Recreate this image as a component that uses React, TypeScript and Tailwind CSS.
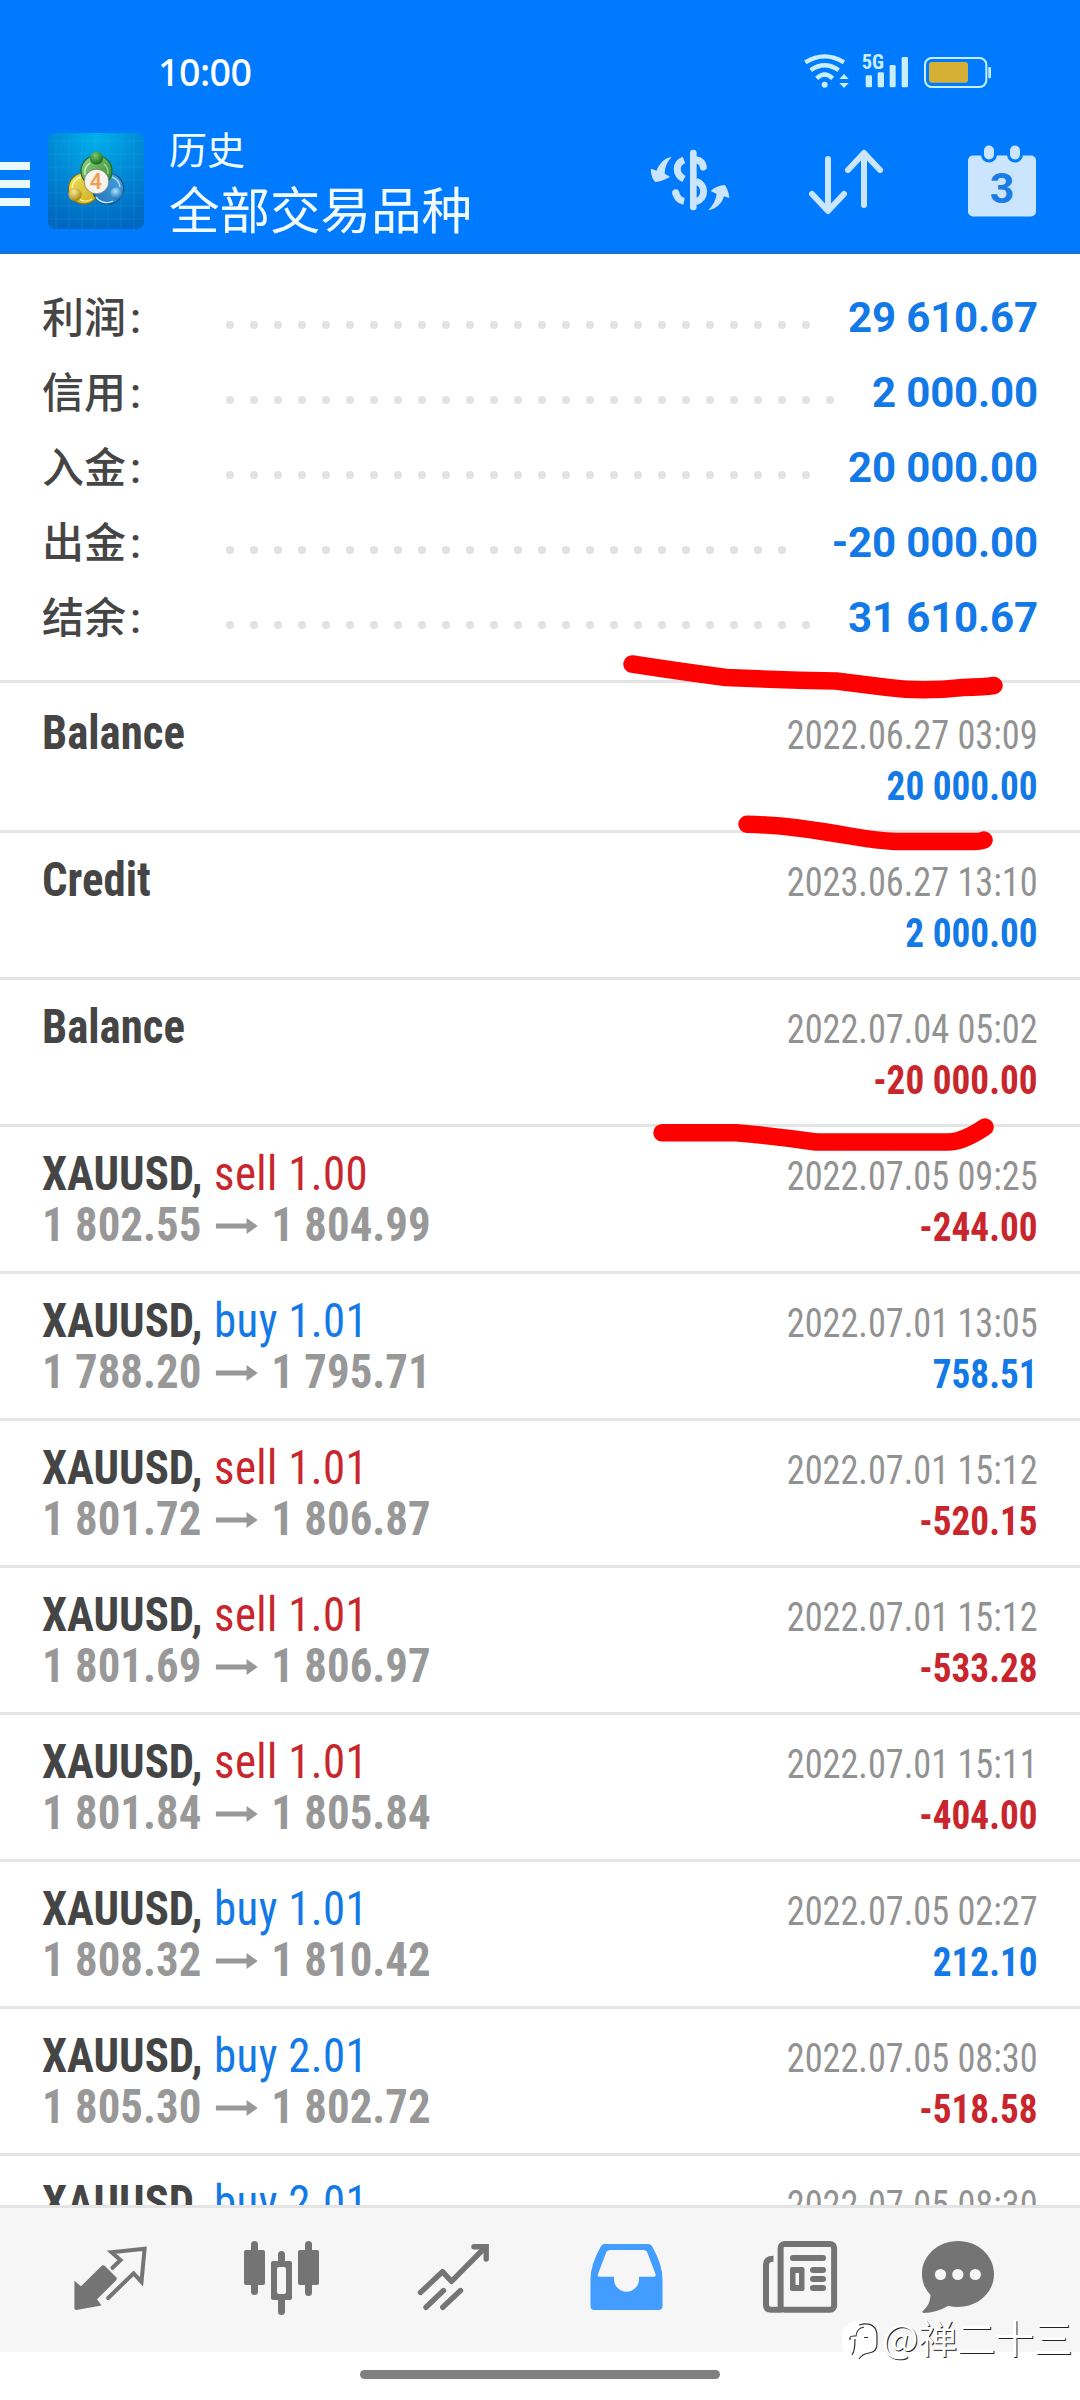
import type { ReactNode } from "react";

type Tone = "blue" | "red";

type SummaryRow = {
  label: string;
  value: string;
  dots: number;
};

type HistoryItem = {
  title: string;
  action?: string;
  side?: Tone;
  open?: string;
  close?: string;
  date: string;
  amount?: string;
  tone: Tone;
};

const toneClass: Record<Tone, string> = {
  blue: "text-[#1279e6]",
  red: "text-[#c8262c]",
};

const summary: SummaryRow[] = [
  { label: "利润", value: "29 610.67", dots: 25 },
  { label: "信用", value: "2 000.00", dots: 26 },
  { label: "入金", value: "20 000.00", dots: 25 },
  { label: "出金", value: "-20 000.00", dots: 24 },
  { label: "结余", value: "31 610.67", dots: 25 },
];

const history: HistoryItem[] = [
  { title: "Balance", date: "2022.06.27 03:09", amount: "20 000.00", tone: "blue" },
  { title: "Credit", date: "2023.06.27 13:10", amount: "2 000.00", tone: "blue" },
  { title: "Balance", date: "2022.07.04 05:02", amount: "-20 000.00", tone: "red" },
  { title: "XAUUSD", action: "sell 1.00", side: "red", open: "1 802.55", close: "1 804.99", date: "2022.07.05 09:25", amount: "-244.00", tone: "red" },
  { title: "XAUUSD", action: "buy 1.01", side: "blue", open: "1 788.20", close: "1 795.71", date: "2022.07.01 13:05", amount: "758.51", tone: "blue" },
  { title: "XAUUSD", action: "sell 1.01", side: "red", open: "1 801.72", close: "1 806.87", date: "2022.07.01 15:12", amount: "-520.15", tone: "red" },
  { title: "XAUUSD", action: "sell 1.01", side: "red", open: "1 801.69", close: "1 806.97", date: "2022.07.01 15:12", amount: "-533.28", tone: "red" },
  { title: "XAUUSD", action: "sell 1.01", side: "red", open: "1 801.84", close: "1 805.84", date: "2022.07.01 15:11", amount: "-404.00", tone: "red" },
  { title: "XAUUSD", action: "buy 1.01", side: "blue", open: "1 808.32", close: "1 810.42", date: "2022.07.05 02:27", amount: "212.10", tone: "blue" },
  { title: "XAUUSD", action: "buy 2.01", side: "blue", open: "1 805.30", close: "1 802.72", date: "2022.07.05 08:30", amount: "-518.58", tone: "red" },
  { title: "XAUUSD", action: "buy 2.01", side: "blue", date: "2022.07.05 08:30", tone: "red" },
];

const StatusIcons = () => (
  <svg viewBox="0 0 612 156" className="h-[52px] w-[204px]" fill="#c9efff">
    <g fill="none" stroke="#c9efff" strokeWidth="13">
      <path d="M28 49Q86 13 144 49" />
      <path d="M44 73Q86 43 128 73" />
      <path d="M62 97Q86 74 110 97" />
    </g>
    <circle cx="86" cy="116" r="9" />
    <path d="M144 84l14 15h-28zM144 126l14-15h-28z" />
    <text x="197" y="70" className="font-['Roboto_Condensed'] font-bold" fontSize="60" textLength="67" lengthAdjust="spacingAndGlyphs">
      5G
    </text>
    <rect x="209" y="88" width="19" height="36" rx="4" />
    <rect x="245" y="79" width="19" height="45" rx="4" />
    <rect x="281" y="57" width="18" height="67" rx="4" />
    <rect x="317" y="33" width="19" height="91" rx="4" />
    <rect x="387" y="36" width="184" height="87" rx="20" fill="none" stroke="#c9efff" strokeWidth="6" />
    <rect x="399" y="48" width="117" height="62" rx="9" fill="#d6b034" />
    <rect x="577" y="63" width="8" height="34" rx="3" />
  </svg>
);

const AppLogo = () => (
  <svg viewBox="0 0 96 96" className="size-24">
    <defs>
      <radialGradient id="sky" cx="50%" cy="5%" r="95%">
        <stop offset="0" stopColor="#00b0ea" />
        <stop offset="0.55" stopColor="#0086d4" />
        <stop offset="1" stopColor="#0068c0" />
      </radialGradient>
      <linearGradient id="green" x1="0" y1="0" x2="1" y2="1">
        <stop offset="0" stopColor="#9ed68a" />
        <stop offset="1" stopColor="#1f8427" />
      </linearGradient>
      <linearGradient id="yellow" x1="0" y1="0" x2="1" y2="1">
        <stop offset="0" stopColor="#f2e35c" />
        <stop offset="1" stopColor="#c9ab18" />
      </linearGradient>
      <linearGradient id="azure" x1="1" y1="0" x2="0" y2="1">
        <stop offset="0" stopColor="#4aa5de" />
        <stop offset="1" stopColor="#1f74bd" />
      </linearGradient>
      <radialGradient id="greenBall" cx="40%" cy="30%" r="70%">
        <stop offset="0" stopColor="#7cc96c" />
        <stop offset="1" stopColor="#176b22" />
      </radialGradient>
      <radialGradient id="yellowBall" cx="40%" cy="30%" r="70%">
        <stop offset="0" stopColor="#f7ec92" />
        <stop offset="1" stopColor="#a58612" />
      </radialGradient>
      <radialGradient id="azureBall" cx="40%" cy="30%" r="70%">
        <stop offset="0" stopColor="#a9e0fa" />
        <stop offset="1" stopColor="#186fb8" />
      </radialGradient>
    </defs>
    <rect width="96" height="96" rx="7" fill="url(#sky)" />
    <path
      d="M8 0v96M21 0v96M34 0v96M47 0v96M60 0v96M73 0v96M86 0v96M0 8h96M0 21h96M0 34h96M0 47h96M0 60h96M0 73h96M0 86h96"
      stroke="#5cc4f2"
      strokeOpacity="0.16"
      strokeWidth="0.8"
    />
    <g strokeWidth="1.2">
      <circle cx="36" cy="55.5" r="15.5" fill="url(#yellow)" stroke="#77721d" />
      <circle cx="60" cy="55.5" r="15.5" fill="url(#azure)" stroke="#1b4f86" />
      <circle cx="48.5" cy="38" r="15.5" fill="url(#green)" stroke="#1d6a2c" />
    </g>
    <g fill="none" strokeWidth="1.4">
      <path d="M37 42a12 12 0 0 1 5 -12" stroke="#d8f3c2" />
      <path d="M56 31a12 12 0 0 1 4 10" stroke="#d8f3c2" strokeOpacity="0.6" />
      <path d="M24 55a12 12 0 0 1 9 -11" stroke="#fbf7b4" />
      <path d="M31 66a12 12 0 0 0 13 0" stroke="#fbf7b4" strokeOpacity="0.8" />
      <path d="M48 64a13 13 0 0 0 17 4" stroke="#c8ecff" />
      <path d="M64 44a12 12 0 0 1 8 10" stroke="#c8ecff" strokeOpacity="0.8" />
    </g>
    <circle cx="48.5" cy="25" r="6.6" fill="url(#greenBall)" />
    <circle cx="27" cy="61.5" r="6.6" fill="url(#yellowBall)" />
    <circle cx="68.5" cy="60.5" r="6.2" fill="url(#azureBall)" />
    <circle cx="48.5" cy="48.5" r="12.3" fill="#f6f3ee" stroke="#5d5a4a" strokeWidth="0.6" />
    <text x="48" y="56" textAnchor="middle" fontSize="21.5" fill="#f0a050" className="font-[Roboto] font-semibold">
      4
    </text>
  </svg>
);

const DollarIcon = () => (
  <svg viewBox="0 0 276 240" className="h-20 w-[92px]" fill="#cce5ff">
    <rect x="138" y="29" width="20" height="182" rx="10" />
    <g fill="none" stroke="#cce5ff" strokeWidth="21">
      <path d="M120 60C93 70 93 103 120 117" />
      <path d="M158 60C170 62 176 70 178 81" strokeLinecap="round" />
      <path d="M120 184C106 181 98 171 95 158" />
      <path d="M156 124C186 132 187 176 156 185" />
    </g>
    <circle cx="95" cy="158" r="10.5" />
    <path d="M83 50C62 54 45 70 38 92L21 86C20 102 25 117 34 126C49 124 64 119 78 110L62 101C62 82 69 65 83 50Z" />
    <path d="M193 211C207 196 215 181 218 162L200 153C212 142 226 136 243 135C250 146 255 160 256 174L240 169C233 192 218 206 193 211Z" />
  </svg>
);

const SortIcon = () => (
  <svg
    viewBox="0 0 80 70"
    className="h-[70px] w-20"
    fill="none"
    stroke="#cce5ff"
    strokeWidth="6"
    strokeLinecap="round"
    strokeLinejoin="round"
  >
    <path d="M22 12v51M6 47l16 17l16 -17" />
    <path d="M58 58v-51M42 23l16 -17l16 17" />
  </svg>
);

const CalendarIcon = () => (
  <svg viewBox="0 0 70 72" className="h-[72px] w-[70px]" fill="#cce5ff">
    <rect x="1" y="10.5" width="68" height="61" rx="5" />
    <g stroke="#007bff" strokeWidth="3">
      <rect x="15.5" y="-1" width="13" height="17" rx="6.5" />
      <rect x="41.5" y="-1" width="13" height="17" rx="6.5" />
    </g>
    <text x="35" y="58" textAnchor="middle" fontSize="43" fill="#1b7ce8" className="font-[Roboto] font-bold">
      3
    </text>
  </svg>
);

const TabIcon = ({ children, className = "text-[#747474]" }: { children: ReactNode; className?: string }) => (
  <svg viewBox="0 0 80 80" className={`size-20 shrink-0 ${className}`} fill="currentColor">
    {children}
  </svg>
);

const Header = () => (
  <header className="h-[254px] border-b-[3px] border-[#1273e0] bg-[#007bff] text-white">
    <div className="flex h-[98px] items-start justify-between pt-[46px] pr-20 pl-[158px]">
      <span className="font-['Noto_Sans'] text-[37.5px] leading-[52px] font-medium tracking-[-0.5px]">10:00</span>
      <StatusIcons />
    </div>
    <div className="flex items-start pt-7">
      <div className="mt-[36px] flex w-[30px] flex-col gap-[10px]">
        <span className="h-2 bg-[#eaf8ff]" />
        <span className="h-2 bg-[#eaf8ff]" />
        <span className="h-2 bg-[#eaf8ff]" />
      </div>
      <div className="mt-[7px] ml-[18px]">
        <AppLogo />
      </div>
      <div className="ml-[25px] w-[475px] font-[Roboto,'Noto_Sans_CJK_SC',sans-serif] text-[#f2fbff]">
        <p className="text-[38px] leading-[50px]">历史</p>
        <p className="text-[50.5px] leading-[71px]">全部交易品种</p>
      </div>
      <div className="mt-[14px]">
        <DollarIcon />
      </div>
      <div className="mt-[21px] ml-[70px]">
        <SortIcon />
      </div>
      <div className="mt-[19px] ml-[81px]">
        <CalendarIcon />
      </div>
    </div>
  </header>
);

const Summary = () => (
  <section className="h-[429px] border-b-[3px] border-[#e4e4e4] px-[42px] pt-[26px]">
    {summary.map((row) => (
      <div key={row.label} className="flex h-[75px] items-center font-[Roboto,'Noto_Sans_CJK_SC',sans-serif] text-[42px]">
        <span className="w-[184px] pt-0.5 font-medium text-[#454545]">
          {row.label}
          <span className="ml-1">:</span>
        </span>
        <span className="flex gap-4 pt-[15px]">
          {Array.from({ length: row.dots }, (_, i) => (
            <span key={i} className="size-2 rounded-full bg-[#e2e2e2]" />
          ))}
        </span>
        <span className="ml-auto font-bold tracking-[-0.15px] text-[#1279e6]">{row.value}</span>
      </div>
    ))}
  </section>
);

const PriceArrow = () => (
  <svg viewBox="0 0 45 16" className="mx-[15px] inline-block h-4 w-[45px] align-[7px]" fill="#989898">
    <path d="M0 5.5h33V0l12 8l-12 8V10.5H0z" />
  </svg>
);

const HistoryRow = ({ item }: { item: HistoryItem }) => (
  <li className="flex h-[147px] shrink-0 justify-between border-b-[3px] border-[#e4e4e4] px-[42px] font-['Roboto_Condensed'] whitespace-nowrap">
    <div className="origin-left scale-x-[0.934] pt-[21px] text-[48px] leading-[51px]">
      <p>
        <span className="font-bold text-[#454545]">
          {item.title}
          {item.action ? "," : null}
        </span>
        {item.side ? <span className={`ml-px tracking-[0.4px] ${toneClass[item.side]}`}> {item.action}</span> : null}
      </p>
      {item.open ? (
        <p className="font-bold text-[#989898]">
          {item.open}
          <PriceArrow />
          {item.close}
        </p>
      ) : null}
    </div>
    <div className="pt-6 text-right text-[40px] leading-[51px]">
      <p className="origin-right scale-x-[0.907] text-[#929292]">{item.date}</p>
      {item.amount ? <p className={`origin-right scale-x-93 font-bold ${toneClass[item.tone]}`}>{item.amount}</p> : null}
    </div>
  </li>
);

const TabBar = () => (
  <nav className="flex h-[147px] border-t-[3px] border-[#e4e4e4] bg-[#f6f6f6] pt-8 pl-[70px]">
    <div className="flex gap-[92px]">
      <TabIcon>
        <path d="M4.4 40.7L11 46.3L31.5 26Q33.3 24.3 35 26L46 37Q47.5 39 46 40.5L27 59.3L31.5 65.5L6.4 70Q4.4 70 4.4 68Z" />
        <path d="M42.5 27.8L50.5 20L41.5 12.2L74.6 8.8L71.5 41.8L63.6 33.3L38.2 58" fill="none" stroke="currentColor" strokeWidth="4" strokeLinecap="round" />
      </TabIcon>
      <TabIcon>
        <rect x="2" y="10" width="21" height="35" rx="2" />
        <rect x="9" y="1" width="7" height="54" rx="3.5" />
        <path d="M31 21h17q2 0 2 2v35q0 2 -2 2h-17q-2 0 -2 -2v-35q0 -2 2 -2zM37 27q-2 0 -2 2v23q0 2 2 2h5q2 0 2 -2v-23q0 -2 -2 -2z" fillRule="evenodd" />
        <path d="M36 23v-8.5a3.5 3.5 0 0 1 7 0V23zM36 58v13.5a3.5 3.5 0 0 0 7 0V58z" />
        <rect x="56" y="10" width="21" height="35" rx="2" />
        <rect x="63" y="1" width="7" height="55" rx="3.5" />
      </TabIcon>
      <TabIcon>
        <g fill="none" stroke="currentColor" strokeWidth="5.4" strokeLinecap="round" strokeLinejoin="round">
          <path d="M6.5 52.5L28.5 31.7L37.5 41.3L71.5 7" />
          <path d="M60 6.7H72.2V19" strokeLinejoin="miter" />
          <path d="M12 67.3L29.5 50.5M28.8 67.3L46.5 50.5" />
        </g>
      </TabIcon>
      <TabIcon className="text-[#439cff]">
        <path
          fillRule="evenodd"
          d="M18 4h44q3 0 4.5 3q10 18 10 32v27q0 4 -4 4h-64q-4 0 -4 -4v-27q0 -14 10 -32q1.5 -3 3.5 -3zM24 10q-3 0 -4 3l-8 21q-1 2.7 2 2.7h14v2.5a12.5 12.5 0 0 0 25 0v-2.5h14.5q3 0 2 -2.7l-8 -21q-1 -3 -4 -3z"
        />
      </TabIcon>
      <TabIcon>
        <g fill="none" stroke="currentColor" strokeWidth="6">
          <rect x="22.6" y="4" width="53.5" height="65.7" rx="4" />
          <path d="M15.5 18.8Q8 18.8 8 25V65Q8 69.7 13 69.7H24" />
          <path d="M35 18H65M55 30H65M55 39H65M55 48H65" strokeLinecap="round" />
        </g>
        <path fillRule="evenodd" d="M34 27h10.5q2 0 2 2v20q0 2 -2 2h-10.5q-2 0 -2 -2v-20q0 -2 2 -2zM37.5 33v12h3.5v-12z" />
      </TabIcon>
      <TabIcon className="-ml-3 text-[#747474]">
        <path d="M40 1C60 1 76 15.5 76 34S60 67 40 67Q35 67 30.5 65.8Q18 73 5.5 73Q3.5 72.5 5 71Q12.5 64 12.5 55Q4 46 4 34C4 15.5 20 1 40 1Z" />
        <g fill="#f6f6f6">
          <circle cx="22.5" cy="34.5" r="5.6" />
          <circle cx="39.8" cy="34.5" r="5.6" />
          <circle cx="57.3" cy="34.5" r="5.6" />
        </g>
      </TabIcon>
    </div>
  </nav>
);

// red marker strokes drawn by hand over the list
const MarkerStrokes = () => (
  <svg
    viewBox="0 0 1080 2400"
    className="pointer-events-none absolute inset-0 h-[2400px] w-[1080px]"
    fill="none"
    stroke="#ff0000"
    strokeWidth="17.5"
    strokeLinecap="round"
    strokeLinejoin="round"
  >
    <path d="M632 664Q677 671 726 677.5Q781 680 836 681L888 687.5Q922 692 963 687.5Q985 687 994 685.5" />
    <path d="M747 824.3Q775 825 798 828T850 836T895 841.5H974Q981 841.5 984 840" />
    <path d="M662 1132.7H736Q775 1136 816 1142H948Q963 1142 985 1127" />
  </svg>
);

const Watermark = () => (
  <div className="absolute top-[2311px] left-[841px] flex items-center">
    <svg viewBox="0 0 38 48" className="h-12 w-[38px]">
      <rect x="1" y="9" width="36" height="38" rx="15" fill="#fff" />
      <g fill="none" stroke="#333" strokeWidth="1.2">
        <path d="M18 13q10 -3 15 2q3 3 3 9v8q0 8 -8 9q-7 1 -10 6" />
        <path d="M11 43q3 -4 3 -16M9 28v-2q0 -2 4 -2h2q1 -8 8 -9M23 25.500h4" />
      </g>
    </svg>
    <span className="ml-[3px] font-['Noto_Sans_CJK_SC',sans-serif] text-[38.5px] leading-[50px] text-white [text-shadow:1px_1px_0.5px_#222]">
      @禅二十三
    </span>
  </div>
);

export default function App() {
  return (
    <div className="relative flex h-[2400px] w-[1080px] flex-col overflow-hidden bg-white">
      <Header />
      <Summary />
      <ul className="flex h-[1522px] flex-col overflow-hidden pt-[3px]">
        {history.map((item, i) => (
          <HistoryRow key={i} item={item} />
        ))}
      </ul>
      <TabBar />
      <div className="mt-[18px] ml-[360px] h-[9px] w-[360px] rounded-full bg-[#808080]" />
      <MarkerStrokes />
      <Watermark />
    </div>
  );
}
